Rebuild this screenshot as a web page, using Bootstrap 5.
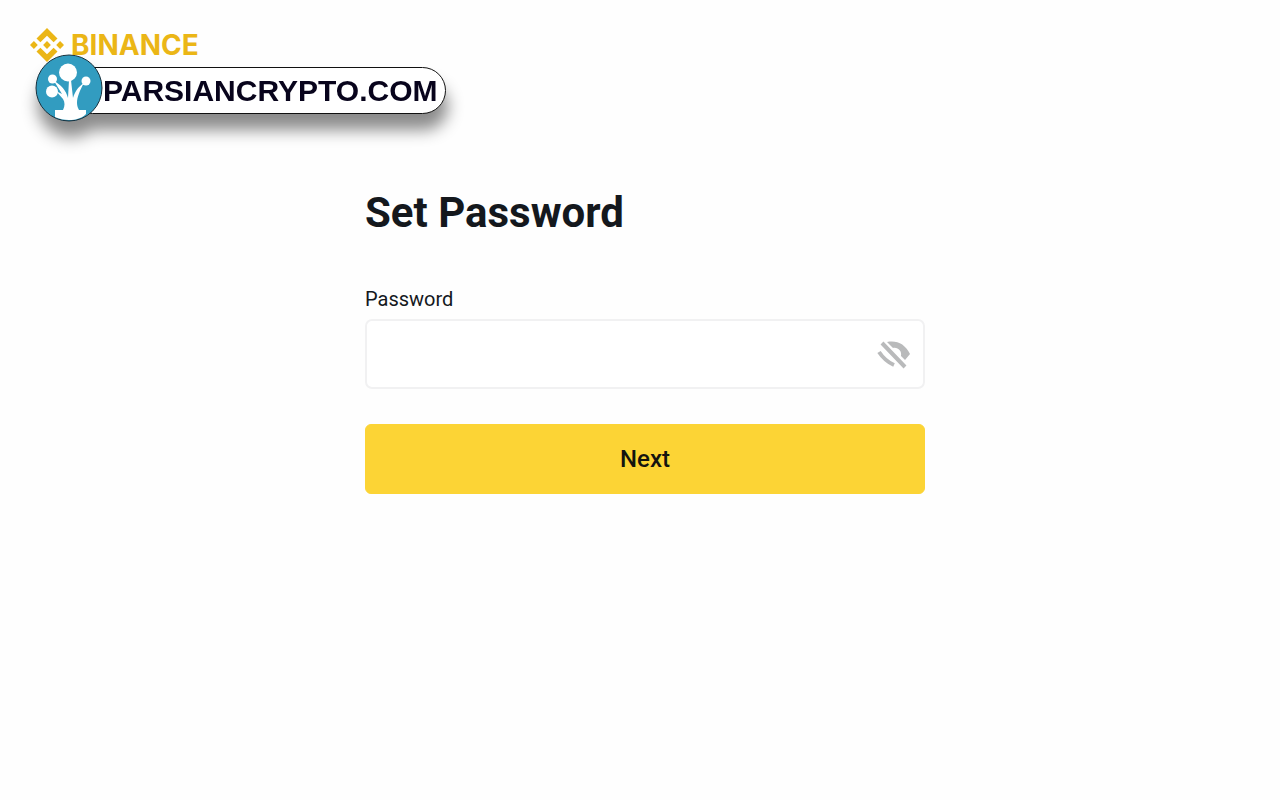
<!DOCTYPE html>
<html lang="en">
<head>
<meta charset="utf-8">
<meta name="viewport" content="width=device-width, initial-scale=1">
<title>Set Password</title>
<link href="https://cdn.jsdelivr.net/npm/bootstrap@5.3.0/dist/css/bootstrap.min.css" rel="stylesheet">
<style>
body { background: #fefefe; color: #14181d; font-family: Roboto, "Liberation Sans", sans-serif; }
.site-header { padding: 28px 30px 0; }
.brand-link { color: #ebb616; font: 700 28px/34px Inter, sans-serif; gap: 7px; }
.partner { position: absolute; top: 54px; left: 35px; filter: drop-shadow(2px 16px 8px rgba(0, 0, 0, .45)); }
.partner-mark { position: relative; z-index: 1; }
.partner-name { height: 47px; margin: 4px 0 0 -34px; padding: 0 8px 0 33px; border: 1px solid #111; background: #fff; color: #08041c; font: 700 30px/46px "Liberation Sans", sans-serif; }
.form-area { width: 100%; max-width: 570px; padding: 119px 0 32px 10px; }
.page-title { margin: 0 0 49px; font-size: 42px; line-height: 50px; font-weight: 700; }
.field-label { margin-bottom: 8px; font-size: 20px; line-height: 24px; }
.field-box { height: 70px; margin-bottom: 35px; border: 2px solid #f1f1f2; border-radius: 7px; background: #fff; }
.field-box .form-control { font-size: 20px; }
.eye-btn { padding: 0 12px; color: #b9babb; border: 0; }
.next-btn { height: 70px; border-radius: 6px; --bs-btn-bg: #fcd435; --bs-btn-border-color: #fcd435; --bs-btn-hover-bg: #f5cb27; --bs-btn-color: #14140f; font-size: 24px; font-weight: 500; }
</style>
</head>
<body>
<header class="site-header">
  <a class="brand-link d-inline-flex align-items-center text-decoration-none" href="#">
    <svg width="34" height="34" viewBox="0 0 34 34" fill="currentColor" aria-hidden="true">
      <path d="M10.400 14.300 17 7.700l6.600 6.600 3.900-3.900L17 0 6.500 10.400zM0 17l3.900-3.900L7.800 17l-3.900 3.900zM10.400 19.700 17 26.300l6.600-6.600 3.900 3.900L17 34 6.500 23.600zM26.200 17l3.900-3.900L34 17l-3.900 3.900zM17 13.100 20.900 17 17 20.900 13.100 17z"/>
    </svg>
    <span>BINANCE</span>
  </a>
  <a class="partner d-flex align-items-center text-decoration-none" href="#">
    <svg class="partner-mark" width="68" height="68" viewBox="0 0 68 68" aria-hidden="true">
      <circle cx="34" cy="34" r="33" fill="#329cc0" stroke="#17313e"/>
      <g fill="#fff">
        <circle cx="33" cy="18.500" r="9"/><circle cx="17.500" cy="25" r="4.500"/><circle cx="17" cy="37.500" r="6"/><circle cx="51" cy="27" r="4.500"/>
        <path d="M20 56h8c2-4 2-8 0-11l-7-8 6 3-8-13c7 4 12 9 14 17l1-18h2l2 18c2-7 6-12 11-15-4 7-7 14-7 20 0 3 1 5 2 7h7v4c-4 4-10 6-17 6-5 0-10-1-14-3z"/>
      </g>
    </svg>
    <span class="partner-name rounded-pill">PARSIANCRYPTO.COM</span>
  </a>
</header>
<main class="form-area mx-auto">
  <h1 class="page-title">Set Password</h1>
  <form>
    <label class="field-label d-block" for="password">Password</label>
    <div class="field-box input-group flex-nowrap">
      <input class="form-control border-0 bg-transparent" type="password" id="password">
      <button class="btn eye-btn" type="button" aria-label="Show password">
        <svg width="34" height="30" viewBox="0 0 34 30" aria-hidden="true">
          <path d="M5 4 28 28M2 13c4 6 8 10 15 13" fill="none" stroke="currentColor" stroke-width="4"/>
          <path d="M10 3C20 1 28 5 33 15l-5 6-4-4c1-5-3-9-8-8z" fill="currentColor"/>
        </svg>
      </button>
    </div>
    <button class="btn next-btn w-100" type="submit">Next</button>
  </form>
</main>
<script src="https://cdn.jsdelivr.net/npm/bootstrap@5.3.0/dist/js/bootstrap.bundle.min.js"></script>
</body>
</html>
